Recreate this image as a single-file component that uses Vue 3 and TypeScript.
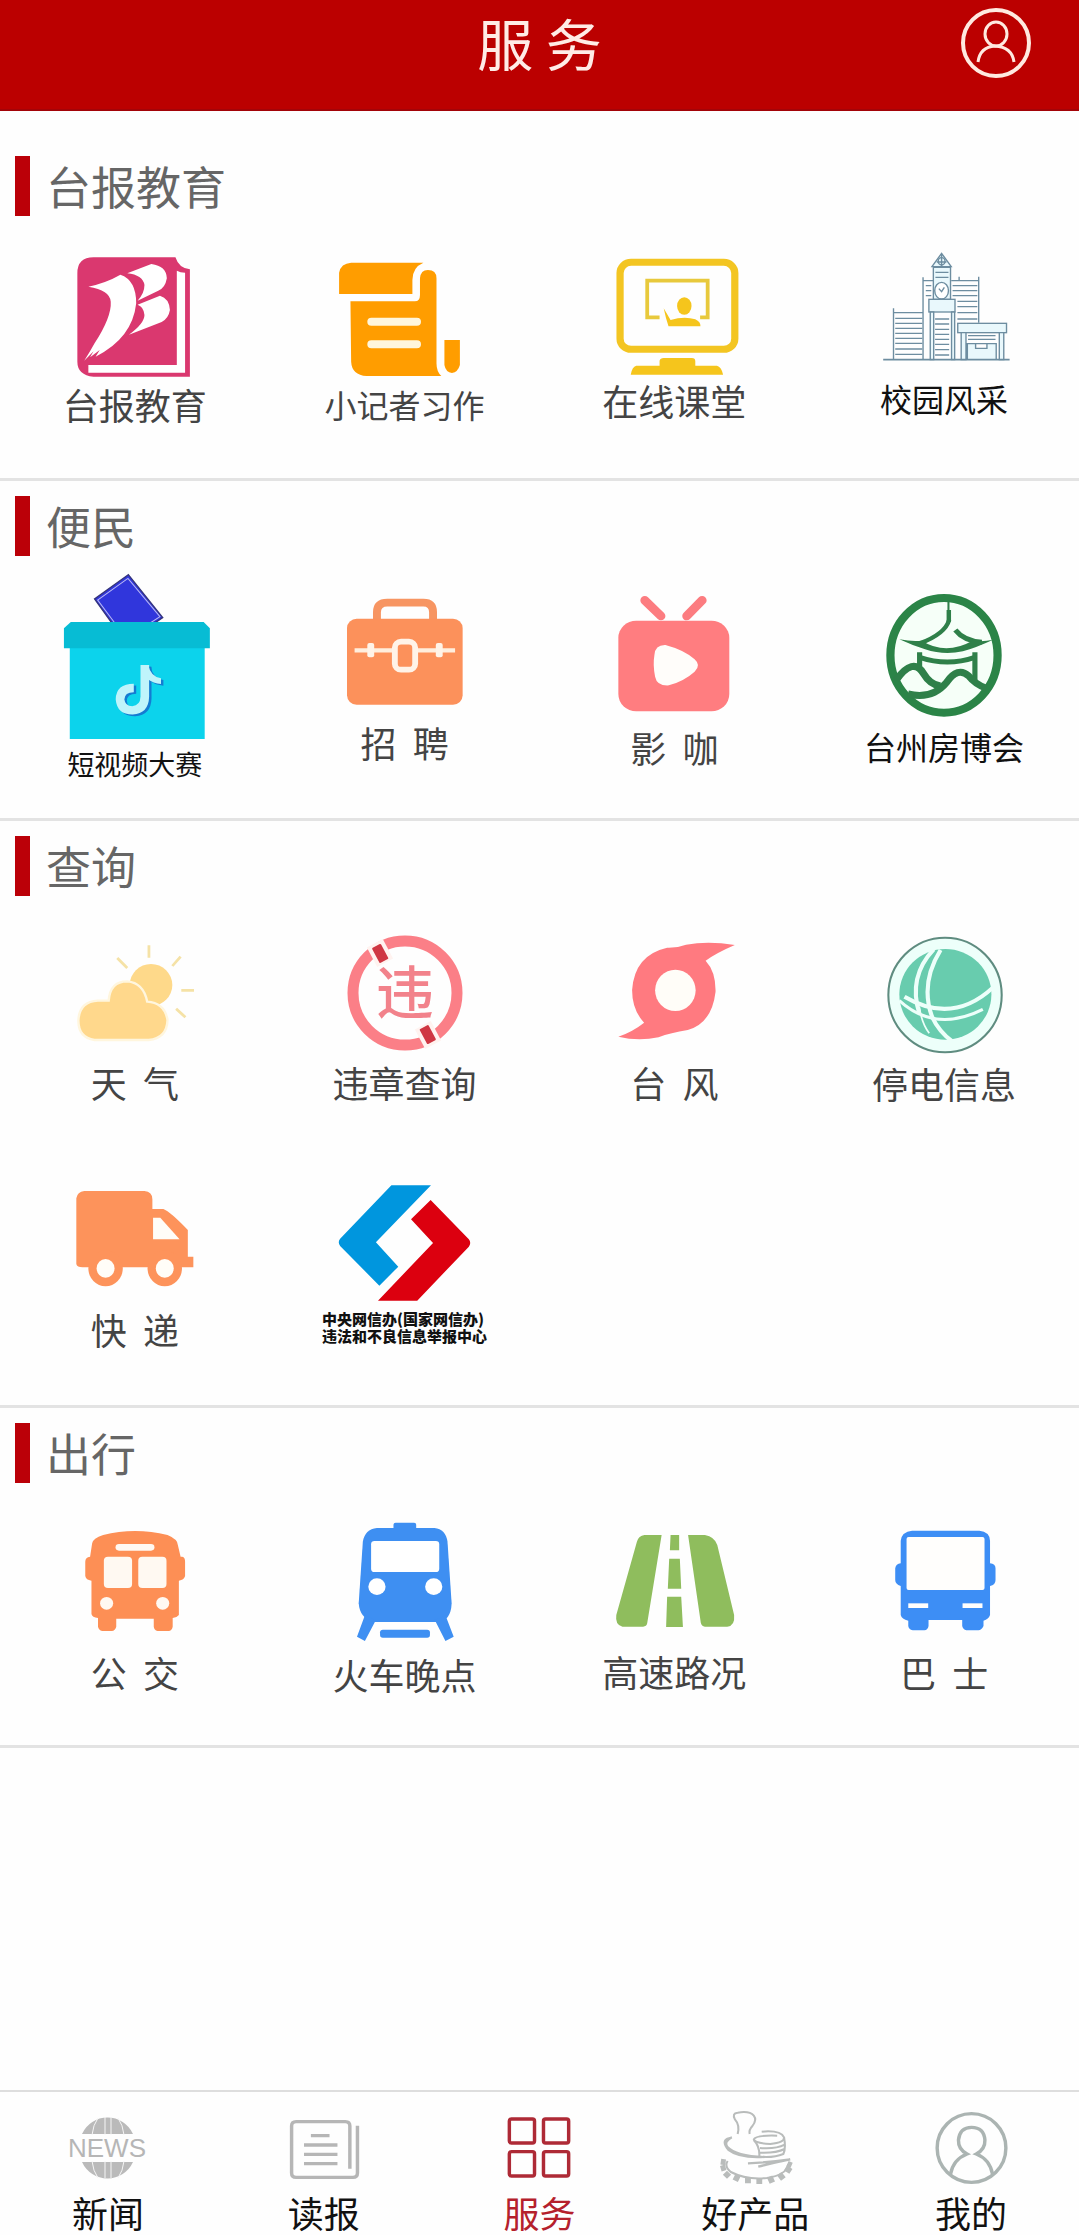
<script setup lang="ts">
interface Service {
  icon: string
  label: string
  box: string
  height: number
  kind?: 'mid' | 'small' | 'fine'
  dark?: boolean
}

interface Section {
  title: string
  services: Service[]
}

interface Tab {
  icon: string
  label: string
  box: string
  active?: boolean
}

const sections: Section[] = [
  {
    title: '台报教育',
    services: [
      { icon: 'book', label: '台报教育', box: '131 -72 523 504', height: 168 },
      { icon: 'scroll', label: '小记者习作', box: '915 -72 523 504', height: 168, kind: 'mid' },
      { icon: 'screen', label: '在线课堂', box: '128 -72 524 492', height: 164 },
      { icon: 'campus', label: '校园风采', box: '913 -72 524 486', height: 162, kind: 'mid', dark: true },
    ],
  },
  {
    title: '便民',
    services: [
      { icon: 'ballot', label: '短视频大赛', box: '131 228 523 564', height: 188, kind: 'small', dark: true },
      { icon: 'case', label: '招\u00a0\u00a0聘', box: '915 228 523 498', height: 166 },
      { icon: 'tv', label: '影\u00a0\u00a0咖', box: '128 -12 524 513', height: 171 },
      { icon: 'pavilion', label: '台州房博会', box: '913 -12 524 510', height: 170, kind: 'mid', dark: true },
    ],
  },
  {
    title: '查询',
    services: [
      { icon: 'weather', label: '天\u00a0\u00a0气', box: '131 228 523 498', height: 166 },
      { icon: 'violation', label: '违章查询', box: '315 896 180 166', height: 166 },
      { icon: 'typhoon', label: '台\u00a0\u00a0风', box: '128 -12 524 498', height: 166 },
      { icon: 'power', label: '停电信息', box: '913 -12 524 501', height: 167 },
      { icon: 'truck', label: '快\u00a0\u00a0递', box: '131 -51 523 498', height: 166 },
      { icon: 'report', label: '中央网信办(国家网信办)\n违法和不良信息举报中心', box: '915 -51 523 501', height: 167, kind: 'fine', dark: true },
    ],
  },
  {
    title: '出行',
    services: [
      { icon: 'bus', label: '公\u00a0\u00a0交', box: '131 -51 523 507', height: 169 },
      { icon: 'train', label: '火车晚点', box: '915 -51 523 513', height: 171 },
      { icon: 'road', label: '高速路况', box: '128 -51 524 504', height: 168 },
      { icon: 'coach', label: '巴\u00a0\u00a0士', box: '913 -51 524 507', height: 169 },
    ],
  },
]

const tabs: Tab[] = [
  { icon: 'news', label: '新闻', box: '58 2092 100 100' },
  { icon: 'paper', label: '读报', box: '796 36 290 300' },
  { icon: 'grid', label: '服务', box: '1423 36 290 300', active: true },
  { icon: 'stamp', label: '好产品', box: '480 36 291 300' },
  { icon: 'me', label: '我的', box: '1108 36 291 300' },
]
</script>

<template>
  <div class="page">
    <header class="topbar">
      <h1>服 务</h1>
      <button class="profile" type="button" aria-label="个人中心">
        <svg viewBox="0 0 72 72" width="72" height="72" fill="none" stroke="#ffe9e0">
          <circle cx="36" cy="36" r="33" stroke-width="4" />
          <ellipse cx="36" cy="27" rx="11" ry="12" stroke-width="3" />
          <path d="M18 55Q20 40 35 39Q52 40 54 55" stroke-width="3" />
        </svg>
      </button>
    </header>

    <main>
      <section v-for="section in sections" :key="section.title">
        <h2>{{ section.title }}</h2>
        <div class="services">
          <a v-for="s in section.services" :key="s.icon" href="#" class="service">
            <svg class="art" :viewBox="s.box" :height="s.height" preserveAspectRatio="none" aria-hidden="true">
              <template v-if="s.icon === 'book'">
                <path fill="#da386f" d="M225 100Q225 52 272 52H510Q520 85 552 88V410H272Q225 405 225 365Z" />
                <path fill="#fff" d="M514 92Q524 98 538 98V398H257V375H514Z" />
                <path fill="#fff" d="M257 140Q310 128 350 104Q396 120 396 190Q385 295 278 350L290 330L262 352L272 334L245 362Q262 335 275 310Q325 230 322 185Q320 150 257 140Z" />
                <path fill="#fff" d="M370 100L440 72Q484 78 485 115Q480 145 460 152L400 182Q420 160 420 135Q415 105 370 100Z" />
                <path fill="#fff" d="M400 194L465 167Q492 175 494 210Q490 235 470 246L375 284Q420 250 420 225Q418 200 400 194Z" />
              </template>
              <template v-else-if="s.icon === 'scroll'">
                <g fill="#ff9d00">
                  <path d="M985 162V98Q990 70 1020 68H1230Q1198 82 1198 120V162Z" />
                  <path d="M1018 184H1205Q1220 184 1220 165V115Q1222 90 1243 90Q1268 90 1268 115V370Q1268 395 1282 408H1065Q1022 405 1020 365Z" />
                  <path d="M1291 300H1336V375Q1330 397 1313 399Q1295 397 1291 375Z" />
                </g>
                <path d="M1079 245H1211M1079 313H1211" stroke="#fff6dc" stroke-width="24" stroke-linecap="round" />
              </template>
              <template v-else-if="s.icon === 'screen'">
                <rect x="233" y="67" width="334" height="261" rx="32" fill="none" stroke="#f3c522" stroke-width="21" />
                <path d="M348 232H312V122H488V232H466" fill="none" stroke="#e8c93c" stroke-width="11" />
                <g fill="#f5c51c">
                  <ellipse cx="420" cy="198" rx="21" ry="26" />
                  <path d="M360 205L380 240Q420 228 452 238Q468 246 467 259H374Q366 235 360 205Z" />
                  <path d="M348 377V362Q350 354 360 354H442Q452 354 452 364V377H515Q528 380 533 404H264Q268 380 280 377Z" />
                </g>
              </template>
              <template v-else-if="s.icon === 'campus'">
                <g fill="#e9f8fc" stroke="#6d8da0" stroke-width="4">
                  <path d="M1028 205V359M1028 218H1114M1114 112V359M1114 122H1144M1196 122H1276V248M1219 110V122M1276 110V122" fill="none" />
                  <path d="M1033 235H1112M1033 250H1112M1033 265H1112M1033 280H1112M1033 295H1112M1033 310H1112M1033 327H1112M1033 343H1112M1122 137H1138M1122 152H1138M1122 167H1138M1200 137H1272M1200 152H1272M1200 167H1272M1214 184H1272M1214 200H1272M1214 218H1272M1214 237H1272" />
                  <path d="M1168 40L1140 80H1196ZM1168 40V78M1154 66H1182" />
                  <ellipse cx="1168" cy="64" rx="10" ry="11" fill="none" />
                  <path d="M1144 82H1194V178H1144ZM1150 97H1188M1150 112H1188" />
                  <ellipse cx="1168" cy="152" rx="20" ry="25" fill="#fff" />
                  <path d="M1160 146L1168 155L1176 142" fill="none" />
                  <rect x="1131" y="178" width="76" height="38" />
                  <path d="M1135 216H1145V359H1135ZM1197 216H1206V359H1197Z" />
                  <path d="M1149 237H1190M1149 252H1190M1149 268H1190M1149 283H1190M1149 298H1190M1149 313H1190M1149 329H1190M1149 345H1190" />
                  <rect x="1215" y="250" width="142" height="28" />
                  <path d="M1225 278H1239V359H1225ZM1336 278H1349V359H1336ZM1243 359V311H1327V359M1267 311V325H1300V311M1245 287H1325M1245 298H1325" />
                  <path d="M998 359H1366" stroke-width="5" />
                </g>
              </template>
              <template v-else-if="s.icon === 'ballot'">
                <path d="M373 284L275 357L330 436H440L473 413Z" fill="#3036dc" stroke="#34347c" stroke-width="4" />
                <path d="M336 432L284 360L372 295L465 410L432 432" fill="none" stroke="#b9b8f4" stroke-width="3" />
                <path fill="#0cd3ec" d="M203 500H595V777H203Z" />
                <path fill="#07bcd4" d="M186 505V445L206 426H592L610 445V505Z" />
                <g fill="none" stroke="#147bd2" stroke-width="25" transform="translate(7 5)">
                  <path d="M389 624Q350 624 349 658Q352 691 385 691Q420 689 421 650V555" />
                  <path d="M421 555H431Q438 590 468 595V612Q445 610 430 598Z" fill="#147bd2" stroke="none" />
                </g>
                <g fill="none" stroke="#bff4fb" stroke-width="25">
                  <path d="M389 624Q350 624 349 658Q352 691 385 691Q420 689 421 650V555" />
                  <path d="M421 555H431Q438 590 468 595V612Q445 610 430 598Z" fill="#bff4fb" stroke="none" />
                </g>
              </template>
              <template v-else-if="s.icon === 'case'">
                <path d="M1095 420V397Q1095 368 1125 368H1230Q1258 368 1258 397V420" fill="none" stroke="#f79562" stroke-width="23" />
                <rect x="1008" y="416" width="336" height="258" rx="28" fill="#fc915b" />
                <path d="M1030 511H1140M1212 511H1322" stroke="#ffeedd" stroke-width="13" />
                <rect x="1067" y="489" width="20" height="43" rx="6" fill="#fff3e8" />
                <rect x="1266" y="489" width="20" height="43" rx="6" fill="#fff3e8" />
                <rect x="1147" y="485" width="59" height="84" rx="18" fill="#fc915b" stroke="#fff3e8" stroke-width="17" />
              </template>
              <template v-else-if="s.icon === 'tv'">
                <path d="M305 121L352 168M472 121L427 168" stroke="#fc7c80" stroke-width="26" stroke-linecap="round" />
                <rect x="228" y="182" width="323" height="272" rx="52" fill="#ff7d80" />
                <path fill="#fffdfa" d="M333 285Q335 254 365 255Q420 270 450 298Q470 316 450 335Q420 363 375 376Q340 378 335 350Q328 315 333 285Z" />
              </template>
              <template v-else-if="s.icon === 'pavilion'">
                <ellipse cx="1175" cy="286" rx="156" ry="172" fill="#f6fff8" stroke="#2b8447" stroke-width="24" />
                <g fill="none" stroke="#2f8049">
                  <path d="M1189 150V185" stroke-width="13" />
                  <path d="M1188 125V180" stroke-width="6" />
                  <path d="M1190 180Q1178 222 1105 250" stroke-width="13" />
                  <path d="M1208 210Q1232 242 1285 247" stroke-width="15" />
                  <path d="M1104 292Q1185 320 1265 292" stroke-width="15" />
                  <path d="M1104 277V325M1265 277V362" stroke-width="15" />
                  <path d="M1036 360Q1085 290 1115 340Q1135 375 1165 378" stroke-width="21" />
                  <path d="M1070 402Q1140 420 1182 368Q1215 318 1247 348Q1265 372 1298 385" stroke-width="21" />
                </g>
                <path fill="#2f8049" d="M1045 238Q1085 246 1110 242Q1180 287 1258 242Q1290 246 1318 239Q1270 262 1230 274Q1175 287 1120 268Q1080 255 1045 238Z" />
              </template>
              <template v-else-if="s.icon === 'weather'">
                <ellipse cx="439" cy="495" rx="62" ry="63" fill="#fed98a" />
                <path d="M275 660Q228 652 228 602Q230 545 285 542H316Q320 484 370 484Q417 488 428 545Q478 548 487 600Q485 655 432 660Z" fill="#ffd88c" stroke="#fff6de" stroke-width="7" />
                <path d="M433 376V413M341 414L370 444M525 410L501 438M527 511H564M512 566L539 592" stroke="#f5e2a6" stroke-width="8" />
              </template>
              <template v-else-if="s.icon === 'violation'">
                <circle cx="405" cy="993" r="52" fill="none" stroke="#fb7f87" stroke-width="11" />
                <g transform="rotate(-28 380 953)">
                  <rect x="371" y="942" width="18" height="22" fill="#fff3f0" />
                  <rect x="375" y="945" width="10" height="17" rx="1" fill="#cf3743" />
                </g>
                <g transform="rotate(-28 428 1035)">
                  <rect x="419" y="1024" width="18" height="22" fill="#fff3f0" />
                  <rect x="423" y="1026" width="10" height="17" rx="1" fill="#cf3743" />
                </g>
                <text class="mark" x="405" y="1014" text-anchor="middle">违</text>
              </template>
              <template v-else-if="s.icon === 'typhoon'">
                <path fill="#ff7a80" d="M268 270Q275 165 370 143Q400 144 425 134Q490 122 567 135Q515 158 482 182Q512 215 511 275Q500 370 430 390Q380 398 345 412Q285 424 228 410Q270 395 303 368Q268 330 268 270Z" />
                <ellipse cx="394" cy="271" rx="59" ry="62" fill="#fffdf8" />
              </template>
              <template v-else-if="s.icon === 'power'">
                <ellipse cx="1178" cy="285" rx="165" ry="172" fill="#edfffa" stroke="#5f8c80" stroke-width="6" />
                <ellipse cx="1179" cy="283" rx="134" ry="136" fill="#68ccae" />
                <g fill="none" stroke="#edfffa">
                  <path d="M1145 148Q1070 230 1103 340" stroke-width="12" />
                  <path d="M1103 320Q1110 370 1132 400" stroke-width="5" />
                  <path d="M1165 150Q1105 250 1140 350Q1160 395 1200 425" stroke-width="12" />
                  <path d="M1060 290Q1200 375 1318 262" stroke-width="12" />
                  <path d="M1045 302Q1150 400 1288 328" stroke-width="9" />
                </g>
              </template>
              <template v-else-if="s.icon === 'truck'">
                <g fill="#fd935b">
                  <path d="M222 312V115Q225 95 245 93H420Q443 95 443 118V147H475Q495 155 546 210V290H562V322H240Q224 322 222 312Z" />
                  <ellipse cx="307" cy="325" rx="50" ry="54" />
                  <ellipse cx="479" cy="325" rx="50" ry="54" />
                </g>
                <g fill="#fffdf8">
                  <path d="M445 173H466L522 238H445Z" />
                  <ellipse cx="307" cy="325" rx="26" ry="28" />
                  <ellipse cx="479" cy="325" rx="26" ry="28" />
                </g>
              </template>
              <template v-else-if="s.icon === 'report'">
                <path fill="#0096de" d="M1137 76H1252L1092 247L1157 320L1102 377L988 258Q980 247 988 236Z" />
                <path fill="#dc000f" d="M1251 120L1362 238Q1370 249 1362 260L1212 422H1098L1258 249L1194 178Z" />
              </template>
              <template v-else-if="s.icon === 'bus'">
                <path fill="#fd8f55" d="M268 130Q270 115 300 105Q345 93 393 93Q440 93 487 105Q517 118 517 135L525 170H530Q538 172 538 185V228Q535 240 520 242V345Q515 352 502 354V380Q500 392 490 393H458Q448 390 447 380V356H338V380Q335 392 325 393H297Q287 390 285 380V354Q268 352 266 342V242Q250 240 248 228V185Q248 172 262 170Z" />
                <g fill="#fff9f2">
                  <rect x="336" y="132" width="113" height="20" rx="10" />
                  <rect x="302" y="170" width="82" height="94" rx="12" />
                  <rect x="402" y="170" width="82" height="94" rx="12" />
                  <circle cx="310" cy="310" r="19" />
                  <circle cx="473" cy="310" r="19" />
                </g>
              </template>
              <template v-else-if="s.icon === 'train'">
                <g fill="#3e8ff2">
                  <rect x="1143" y="68" width="66" height="25" rx="6" />
                  <path d="M1095 84H1262Q1295 88 1300 125L1312 310Q1310 365 1270 366H1085Q1045 355 1042 310L1054 125Q1060 88 1095 84Z" />
                  <path d="M1060 346L1037 410L1060 423L1092 360ZM1294 346L1318 410L1294 423L1263 360Z" />
                  <rect x="1104" y="389" width="145" height="24" rx="8" />
                </g>
                <g fill="#fff">
                  <rect x="1078" y="123" width="198" height="93" rx="10" />
                  <circle cx="1095" cy="260" r="25" />
                  <circle cx="1260" cy="260" r="25" />
                </g>
              </template>
              <template v-else-if="s.icon === 'road'">
                <path fill="#8fbd5d" d="M304 105H354L312 370Q310 380 300 380H240Q218 375 222 345L282 125Q287 107 304 105ZM431 105H480Q508 110 516 135L565 345Q568 378 545 380H480Q470 378 468 368ZM380 105H405V151H378ZM376 176H407L411 266H372ZM370 290H411L416 381H367Z" />
              </template>
              <template v-else-if="s.icon === 'coach'">
                <path fill="#3d8ef5" d="M1082 92H1278Q1308 95 1309 122V190Q1325 192 1325 205V240Q1325 255 1309 258V345Q1305 358 1290 362V378Q1285 390 1275 391H1240Q1230 388 1228 378V360H1130V378Q1128 390 1118 391H1084Q1072 388 1071 378V362Q1052 358 1049 345V258Q1033 252 1033 240V205Q1035 192 1049 190V122Q1052 95 1082 92Z" />
                <g fill="#fffefc">
                  <rect x="1066" y="111" width="227" height="159" rx="6" />
                  <rect x="1071" y="310" width="58" height="14" />
                  <rect x="1229" y="310" width="58" height="14" />
                </g>
              </template>
            </svg>
            <span class="label" :class="[s.kind, { dark: s.dark }]">{{ s.label }}</span>
          </a>
        </div>
      </section>
    </main>

    <nav class="tabs">
      <a v-for="t in tabs" :key="t.icon" href="#" :class="{ active: t.active }">
        <svg :viewBox="t.box" width="100" height="100" preserveAspectRatio="none" aria-hidden="true">
          <template v-if="t.icon === 'news'">
            <path fill="#bababa" d="M82 2134A28 28 0 0 1 133 2134ZM82 2162A28 28 0 0 0 133 2162Z" />
            <path d="M98 2118Q93 2125 92 2135M105 2117V2135M111 2117V2135M118 2118Q123 2125 124 2135M92 2161Q93 2171 98 2178M105 2161V2178M111 2161V2178M124 2161Q123 2171 118 2178" fill="none" stroke="#f6f6f6" stroke-width="1" />
            <text class="news" x="107" y="2157" text-anchor="middle">NEWS</text>
          </template>
          <template v-else-if="t.icon === 'paper'">
            <path d="M1016 266V138Q1016 125 1003 125H860Q847 125 847 138V279Q847 292 860 292H1025Q1038 292 1038 279V137M903 167H957M883 195H980M883 223H980M883 251H980" fill="none" stroke="#b6b6b6" stroke-width="10" />
          </template>
          <g v-else-if="t.icon === 'grid'" fill="none" stroke="#ae2a36" stroke-width="10">
            <rect x="1482" y="117" width="73" height="72" rx="6" />
            <rect x="1581" y="117" width="73" height="72" rx="6" />
            <rect x="1482" y="215" width="73" height="73" rx="6" />
            <rect x="1581" y="215" width="73" height="73" rx="6" />
          </g>
          <g v-else-if="t.icon === 'stamp'" fill="none" stroke="#b9bcbb" stroke-width="6">
            <path d="M575 162Q582 135 567 118Q558 100 575 98Q610 92 622 107Q632 120 618 138Q607 150 610 162" />
            <path d="M558 172Q535 185 545 200Q570 228 655 231Q580 236 548 210Q528 185 545 176Z" fill="#b9bcbb" />
            <path d="M645 155Q700 150 710 172Q712 188 670 192Q625 190 622 178Q628 165 690 167" />
            <path d="M622 180Q640 200 638 230Q680 234 708 222Q716 205 710 172M640 204Q685 208 712 194M640 218Q685 220 712 207" />
            <path d="M546 243Q535 258 555 276Q600 300 660 294Q718 285 722 252" />
            <path d="M540 247L526 245M540 262L526 266M550 278L538 290M576 286L568 302M605 292V310M638 294V312M668 290L676 308M696 281L708 297M714 264L730 274M720 251L732 256" stroke-width="17" />
            <path d="M605 250Q660 248 728 238Q680 248 635 260" stroke-width="7" />
          </g>
          <g v-else fill="none" stroke="#abb4b2" stroke-width="10">
            <ellipse cx="1255" cy="204" rx="100" ry="103" />
            <path d="M1194 282Q1202 238 1242 222Q1216 208 1217 180Q1221 142 1255 142Q1291 142 1294 180Q1295 208 1269 222Q1308 238 1316 282" />
          </g>
        </svg>
        <span>{{ t.label }}</span>
      </a>
    </nav>
  </div>
</template>

<style>
body {
  margin: 0;
  background: #fefefe;
}
</style>

<style scoped>
.page {
  display: flex;
  flex-direction: column;
  min-height: 100vh;
  font-family: "Noto Sans CJK SC", "Noto Sans", sans-serif;
  color: #444;
}

.topbar {
  display: grid;
  grid-template-columns: 1fr auto 1fr;
  align-items: start;
  box-sizing: border-box;
  height: 111px;
  padding: 7px 47px 0;
  background: #bb0000;
  border-bottom: 2px solid #a30408;
}

h1 {
  grid-column: 2;
  margin: 0;
  font-size: 56px;
  line-height: 70px;
  font-weight: 400;
  color: #ffece6;
}

.profile {
  justify-self: end;
  width: 72px;
  height: 72px;
  padding: 0;
  border: 0;
  background: none;
}

svg {
  display: block;
}

main {
  flex: 1;
}

section {
  padding: 15px 0;
  border-bottom: 3px solid #e3e3e3;
}

section:first-child {
  padding-top: 45px;
}

h2 {
  margin: 0 15px;
  padding-left: 16px;
  border-left: 15px solid #bb0008;
  font-size: 45px;
  line-height: 60px;
  font-weight: 400;
  color: #666;
}

.services {
  display: grid;
  grid-template-columns: repeat(4, 1fr);
  grid-auto-rows: minmax(247px, auto);
}

.service {
  display: flex;
  flex-direction: column;
  align-items: center;
  text-decoration: none;
  color: #444;
}

.art {
  width: 180px;
}

.label {
  font-size: 36px;
  line-height: 40px;
  white-space: pre;
}

.dark {
  color: #111;
}

.mid {
  font-size: 32px;
}

.small {
  font-size: 27px;
}

.fine {
  font-size: 15px;
  line-height: 17px;
  font-weight: 900;
}

.mark {
  font-size: 58px;
  font-weight: 500;
  fill: #f2828b;
}

.news {
  font-family: "Liberation Sans", Arial, sans-serif;
  font-size: 26px;
  fill: #b6b6b6;
}

.tabs {
  display: grid;
  grid-template-columns: repeat(5, 1fr);
  height: 143px;
  border-top: 2px solid #dedede;
}

.tabs a {
  display: flex;
  flex-direction: column;
  align-items: center;
  font-size: 36px;
  line-height: 40px;
  text-decoration: none;
  color: #111;
}

.tabs a.active {
  color: #b5202c;
}
</style>
